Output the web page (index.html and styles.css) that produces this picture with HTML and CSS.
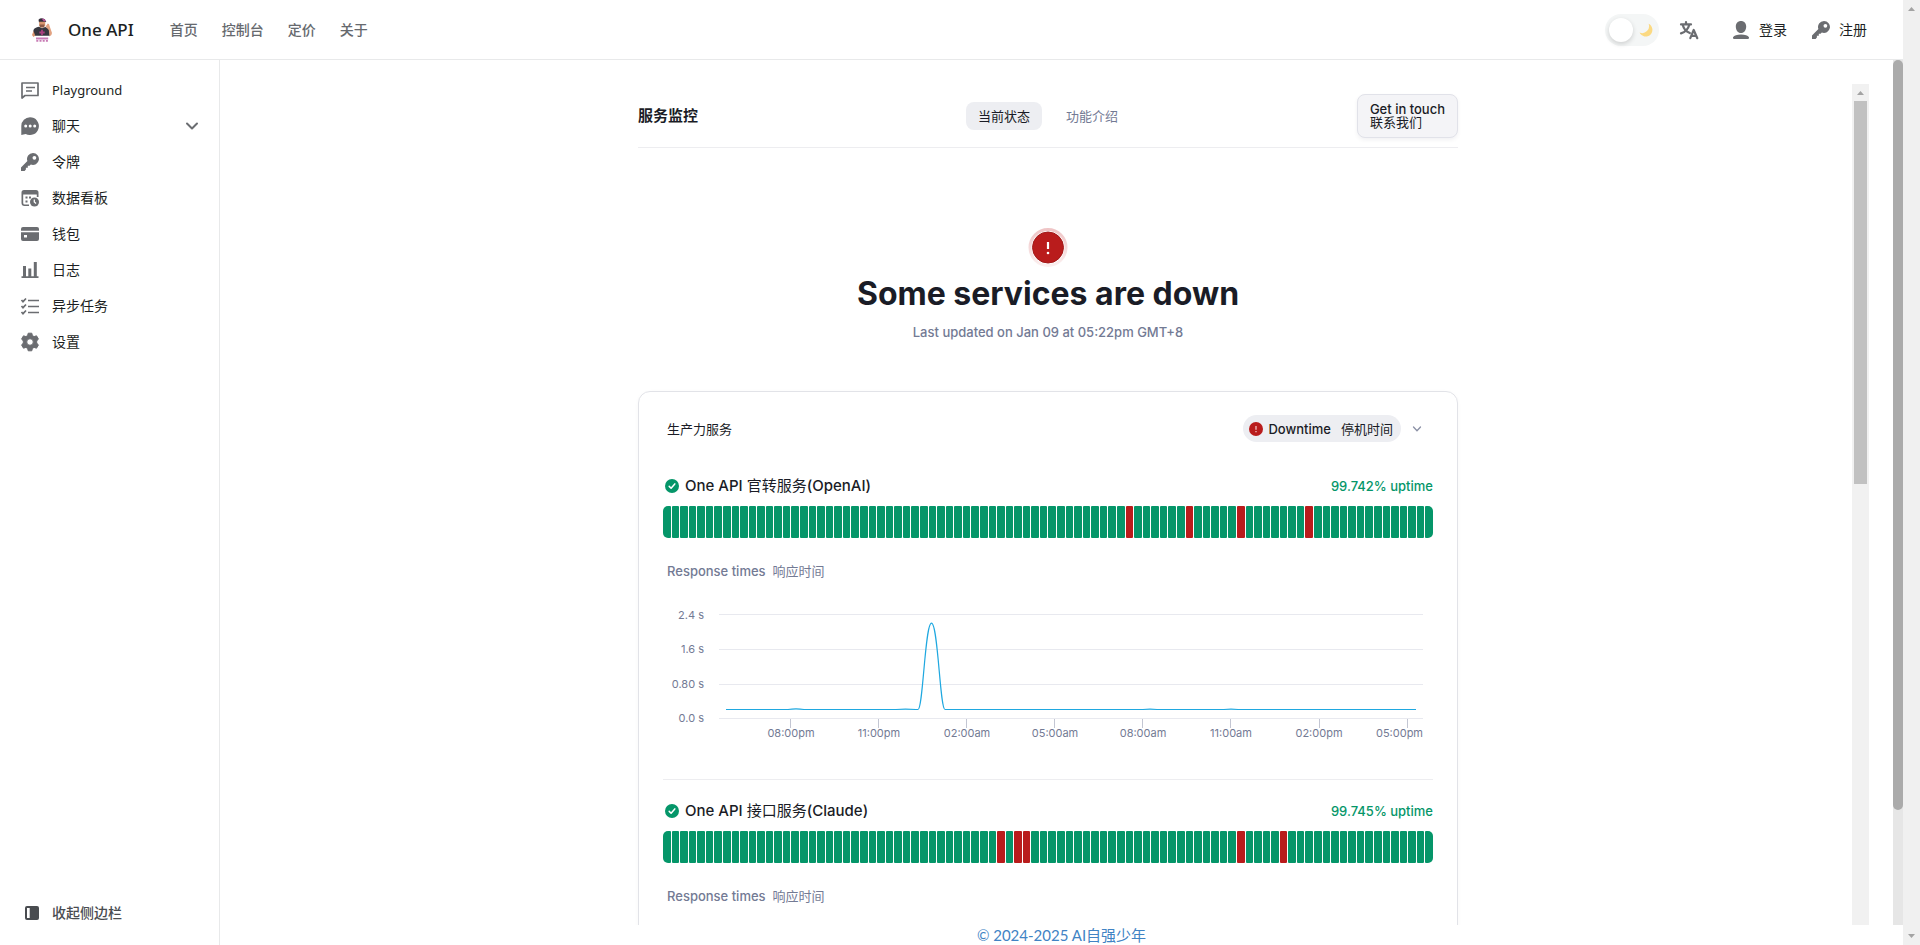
FILE: index.html
```html
<!DOCTYPE html>
<html lang="zh-CN">
<head>
<meta charset="utf-8">
<meta name="viewport" content="width=device-width, initial-scale=1">
<title>One API</title>
<link rel="stylesheet" href="styles.css">
</head>
<body>
<svg class="defs" aria-hidden="true">
  <symbol id="i-key" viewBox="0 0 20 20"><path fill-rule="evenodd" d="M13 1a6 6 0 1 1-2.2 11.6L9.6 13.8H7.8v1.9H5.9v1.9L4.6 19H1v-3.6l6.4-6.3A6 6 0 0 1 13 1zm1.4 2.9a1.9 1.9 0 1 0 0 3.8 1.9 1.9 0 0 0 0-3.8z"/></symbol>
  <symbol id="i-ok" viewBox="0 0 14 14"><circle cx="7" cy="7" r="7" fill="#059669"/><path d="M4.2 7.4l1.9 1.9 3.7-4.4" fill="none" stroke="#fff" stroke-width="1.5" stroke-linecap="round" stroke-linejoin="round"/></symbol>
</svg>

<div class="app">
  <div class="page">
    <header class="topbar">
      <a class="brand" href="#">
        <svg class="logo" viewBox="0 0 20 24">
          <path d="M6.500 1.800Q8 0 11 .4q2.500.3 2.600 2.600l.8.900L7 4.500z" fill="#34303a"/>
          <path d="M9.500.5q4 0 4.200 2.700h-2z" fill="#b5519b"/>
          <path d="M7.200 3.800h6v4q-1.200 2-3.200 2T7.200 7.500z" fill="#d9966f"/>
          <path d="M7.500 6.500h5l-.5 2.800H8z" fill="#8d5b48"/>
          <path d="M1.500 12q1-2.500 5.500-3.200l3 1.500 3.200-1.400q3 .4 4.300 2.800l.5 6H1z" fill="#37373f"/>
          <path d="M13.500 8.500l2.300-3q1.700.4 1.700 2.200L20 15q-.2 3-2.500 3.500l-.7-6.500z" fill="#e2a382"/>
          <path d="M1.500 13L0 17l1.500 2 1.700-1.500z" fill="#d9966f"/>
          <path d="M10 11.800v5.400M7.300 14.500h5.400" stroke="#a9407e" stroke-width="1.800"/>
          <path d="M4 19.500h12.200v2H4zM4.300 22h2v1.700h-2zM7.500 22h2v1.700h-2zM10.700 22h2v1.700h-2zM13.900 22h2v1.700h-2z" fill="#c77ab4"/>
        </svg>
        <span>One API</span>
      </a>
      <nav class="topnav">
        <a href="#">首页</a><a href="#">控制台</a><a href="#">定价</a><a href="#">关于</a>
      </nav>
      <div class="tools">
        <button class="theme" type="button" role="switch" aria-checked="false" aria-label="切换主题">
          <span class="knob"></span>
          <svg width="14" height="14" viewBox="0 0 14 14"><path d="M9.600.8A6.700 6.700 0 1 1 .6 9.600 6.900 6.900 0 0 0 9.600.8z" fill="#fbd982"/></svg>
        </button>
        <button class="iconbtn" type="button" aria-label="语言">
          <svg width="20" height="20" viewBox="0 0 20 20" fill="none" stroke="#6b6d71" stroke-width="2.200" stroke-linecap="round" stroke-linejoin="round"><path d="M2 4.400h10M7 2v2.400M3.800 5q1.300 5.700 7 8M10.200 5Q8.700 11.200 2 13.400M11.300 18.200l3.400-8.200 3.600 8.200M12.500 15.800h4.500"/></svg>
        </button>
        <a class="account" href="#">
          <svg width="20" height="20" viewBox="0 0 20 20"><path d="M10 1c3 0 5.200 2.200 5.200 5.400C15.200 10 13 13 10 13S4.800 10 4.800 6.400C4.800 3.200 7 1 10 1zM2 17.300Q3.800 14.500 10 14.500t8 2.800q.4 1.700-1 1.700H3q-1.400 0-1-1.700z"/></svg>
          <span>登录</span>
        </a>
        <a class="account" href="#"><svg width="20" height="20"><use href="#i-key"/></svg><span>注册</span></a>
      </div>
    </header>

    <div class="body">
      <aside class="sidebar">
        <nav class="menu">
          <a href="#"><svg viewBox="0 0 20 20"><path d="M2 3h16v12.500H5L2 18z" fill="none" stroke="#6b6d71" stroke-width="1.700" stroke-linejoin="round"/><path d="M6 7.500h9M6 11h6" stroke="#6b6d71" stroke-width="1.600"/></svg><span class="latin">Playground</span></a>
          <a href="#"><svg viewBox="0 0 20 20"><path fill-rule="evenodd" d="M10 1.200a8.900 8.900 0 1 1-4.300 16.700L1.300 19V9.900A8.800 8.800 0 0 1 10 1.200zM5.700 8.500a1.500 1.500 0 1 0 0 3 1.500 1.500 0 0 0 0-3zm4.500 0a1.500 1.500 0 1 0 0 3 1.500 1.500 0 0 0 0-3zm4.500 0a1.500 1.500 0 1 0 0 3 1.500 1.500 0 0 0 0-3z"/></svg><span>聊天</span><svg class="chev" viewBox="0 0 14 14"><path d="M2 4.500l5 5 5-5" fill="none" stroke="#6b6d71" stroke-width="2" stroke-linecap="round" stroke-linejoin="round"/></svg></a>
          <a href="#"><svg><use href="#i-key"/></svg><span>令牌</span></a>
          <a href="#"><svg viewBox="0 0 20 20"><path fill-rule="evenodd" d="M4 2h12q2.500 0 2.500 2.500V9h-1.700V6.500H3.200V15q0 1.500 1.500 1.500H9V18H4.500Q1.500 18 1.500 15V4.500Q1.500 2 4 2z"/><path d="M5.500 8.500h2v2h-2zM9 8.500h2v2H9zM5.500 12.500h2v2h-2z"/><circle cx="14.500" cy="14" r="4.500"/><path d="M14.300 11.500V14l1.800 1.400" stroke="#fff" fill="none" stroke-width="1.300"/></svg><span>数据看板</span></a>
          <a href="#"><svg viewBox="0 0 20 20"><path d="M3 3h14q2 0 2 2v1.800H1V5q0-2 2-2z"/><path fill-rule="evenodd" d="M1 8.300h18V15q0 2-2 2H3q-2 0-2-2zM4 11v2.500h3V11z"/></svg><span>钱包</span></a>
          <a href="#"><svg viewBox="0 0 20 20"><path d="M1.500 16.300h17V18h-17zM3 6h3v10.500H3zM8.300 8.500h3v8h-3zM13.800 2h3v14.500h-3z"/></svg><span>日志</span></a>
          <a href="#"><svg viewBox="0 0 20 20" fill="none"><path d="M8 4.500h11M8 10.500h11M8 16.500h11M1.500 4l1.500 1.700L6 2.500M1.500 10l1.500 1.700L6 8.500M1.500 16l1.500 1.700L6 14.500" fill="none" stroke="#6b6d71" stroke-width="1.700"/></svg><span>异步任务</span></a>
          <a href="#"><svg viewBox="0 0 20 20"><path fill-rule="evenodd" d="M8.200 1.200h3.600l.6 2.400 1.700 1 2.400-.8 1.900 3.100L16.700 9v2l1.700 2.100-1.900 3.100-2.400-.8-1.700 1-.6 2.400H8.200l-.6-2.400-1.700-1-2.400.8-1.900-3.100L3.300 11V9L1.600 6.900l1.900-3.100 2.400.8 1.700-1zM10 6.700a3.300 3.300 0 1 0 0 6.600 3.300 3.300 0 0 0 0-6.600z" stroke="#6b6d71" stroke-width="1" stroke-linejoin="round"/></svg><span>设置</span></a>
        </nav>
        <button class="collapse" type="button">
          <svg width="14" height="14" viewBox="0 0 14 14"><rect width="14" height="14" rx="2" fill="#494c50"/><path d="M2 2h2.700v10H2z" fill="#fff"/></svg>
          <span>收起侧边栏</span>
        </button>
      </aside>

      <div class="content">
        <div class="viewport">
          <main class="frame">
            <section class="status">
              <header class="snav">
                <h2>服务监控</h2>
                <nav><a class="on" href="#">当前状态</a><a href="#">功能介绍</a></nav>
                <button type="button">Get in touch<br><span class="zh">联系我们</span></button>
              </header>
              <div class="hero">
                <svg width="40" height="40" viewBox="0 0 40 40"><defs><linearGradient id="ring" x2="0" y2="1"><stop stop-color="#efc5c6"/><stop offset="1" stop-color="#fbefef"/></linearGradient></defs><circle cx="20" cy="19.500" r="18" fill="none" stroke="url(#ring)" stroke-width="3"/><circle cx="20" cy="19.500" r="15.500" fill="#b91c1c" stroke="#a31b1b"/><path d="M20 14v7" stroke="#fff" stroke-width="2.200"/><circle cx="20" cy="25" r="1.300" fill="#fff"/></svg>
                <h1>Some services are down</h1>
                <p>Last updated on Jan 09 at 05:22pm GMT+8</p>
              </div>
              <section class="card">
                <div class="cardhead">
                  <h3>生产力服务</h3>
                  <button type="button"><span class="pill"><svg width="14" height="14" viewBox="0 0 14 14"><circle cx="7" cy="7" r="7" fill="#b91c1c"/><path d="M7 4v3.700M7 9v1.300" stroke="#eeb4b4" stroke-width="1.400"/></svg><span>Downtime</span><span class="zh">停机时间</span></span><svg width="10" height="10" viewBox="0 0 10 10"><path d="M1.500 3L5 6.700 8.500 3" fill="none" stroke="#8a90a5" stroke-width="1.300" stroke-linecap="round"/></svg></button>
                </div>
                <article class="service">
                  <div class="row"><svg width="14" height="14"><use href="#i-ok"/></svg><h4>One API <span class="zh">官转服务</span>(OpenAI)</h4><span class="up">99.742% uptime</span></div>
                  <div class="bars" data-down="54,61,67,75"></div>
                  <p class="rt"><span>Response times</span><span class="zh">响应时间</span></p>
                  <svg class="chart" viewBox="0 0 770 148">
                    <path class="grid" d="M56 14.500h704M56 49.500h704M56 84.500h704M56 118.500h704"/>
                    <path class="tick" d="M127.500 119v9M215.500 119v9M303.500 119v9M391.500 119v9M479.500 119v9M567.500 119v9M656.500 119v9M744.500 119v9"/>
                    <path class="line" d="M63 109.500H125q8-1.200 16 0H233q9-.8 20 0h2C260 109.500 262 23.200 268.500 23.200S277 109.500 282 109.500H480q7-.6 14 0h67q7-.8 14 0H753"/>
                    <g text-anchor="end"><text x="41" y="19">2.4 s</text><text x="41" y="53">1.6 s</text><text x="41" y="88">0.80 s</text><text x="41" y="122">0.0 s</text><text x="760" y="137">05:00pm</text></g>
                    <g text-anchor="middle"><text x="128" y="137">08:00pm</text><text x="216" y="137">11:00pm</text><text x="304" y="137">02:00am</text><text x="392" y="137">05:00am</text><text x="480" y="137">08:00am</text><text x="568" y="137">11:00am</text><text x="656" y="137">02:00pm</text></g>
                  </svg>
                </article>
                <article class="service">
                  <div class="row"><svg width="14" height="14"><use href="#i-ok"/></svg><h4>One API <span class="zh">接口服务</span>(Claude)</h4><span class="up">99.745% uptime</span></div>
                  <div class="bars" data-down="39,41,42,67,72"></div>
                  <p class="rt"><span>Response times</span><span class="zh">响应时间</span></p>
                </article>
              </section>
            </section>
            <div class="sbar"><svg width="17" height="17"><path d="M5 11h7L8.500 7z"/></svg><span class="thumb"></span></div>
          </main>
          <div class="slim"><span></span></div>
        </div>
        <footer><a href="#">© 2024-2025 AI自强少年</a></footer>
      </div>
    </div>
  </div>
  <div class="pagebar"><svg width="17" height="17"><path d="M5 11h7L8.500 7z"/></svg><svg width="17" height="17"><path d="M5 6h7L8.500 10z"/></svg></div>
</div>
<script src="bars.js"></script>
</body>
</html>
```
FILE: styles.css
```css
* { box-sizing: border-box; }
body { margin: 0; background: #fff; color: #1c1f23; font: 14px/20px "Noto Sans", "Noto Sans CJK SC", sans-serif; }
h1, h2, h3, h4, p { margin: 0; }
a { color: inherit; text-decoration: none; }
button { font: inherit; color: inherit; background: none; border: 0; padding: 0; cursor: pointer; }
svg { display: block; flex: none; }
.defs { position: absolute; width: 0; height: 0; }
.zh { font-weight: 400; }

.app { display: flex; height: 100vh; overflow: hidden; }
.page { flex: 1; min-width: 0; display: flex; flex-direction: column; }
.pagebar { width: 17px; background: #f0f0f0; display: flex; flex-direction: column; justify-content: space-between; fill: #a3a3a3; }

.topbar { height: 60px; flex: none; border-bottom: 1px solid #e8e9ea; padding: 0 36px 0 32px; display: flex; align-items: center; }
.brand { display: flex; align-items: center; gap: 16px; font-size: 17px; font-weight: 500; }
.logo { width: 20px; height: 24px; }
.topnav { display: flex; gap: 24px; margin-left: 36px; color: #66696e; font-weight: 500; }
.tools { margin-left: auto; display: flex; align-items: center; fill: #6b6d71; }
.theme { width: 54px; height: 32px; border-radius: 16px; background: #f4f6f6; padding: 0 6px 0 4px; display: flex; align-items: center; justify-content: space-between; }
.knob { width: 24px; height: 24px; border-radius: 50%; background: #fff; box-shadow: 0 2px 5px rgba(0, 0, 0, .16); }
.iconbtn { margin: 0 32px 0 20px; }
.account { display: flex; align-items: center; gap: 8px; }
.account + .account { margin-left: 24px; }

.body { flex: 1; min-height: 0; display: flex; }
.sidebar { width: 220px; flex: none; border-right: 1px solid #e8e9ea; padding: 12px 20px 20px; display: flex; flex-direction: column; justify-content: space-between; }
.menu { display: flex; flex-direction: column; fill: #6b6d71; }
.menu a { height: 36px; display: flex; align-items: center; gap: 12px; }
.menu svg { width: 20px; height: 20px; }
.menu .chev { width: 14px; height: 14px; margin-left: auto; }
.latin { font-size: 13px; }
.collapse { display: flex; align-items: center; gap: 13px; padding-left: 5px; height: 24px; color: #494c50; font-weight: 500; }

.content { flex: 1; min-width: 0; display: flex; flex-direction: column; }
.viewport { flex: 1; min-height: 0; display: flex; padding-left: 24px; }
.slim { width: 10px; margin-left: 24px; background: #e6e6e6; }
.slim span { display: block; height: 750px; border-radius: 5px; background: #ababab; }
.frame { flex: 1; min-width: 0; margin-top: 24px; display: flex; justify-content: space-between; overflow: hidden; color: #1a1c26; font: 13px/20px Inter, "Noto Sans CJK SC", sans-serif; }
.sbar { width: 17px; flex: none; background: #f1f1f1; fill: #a3a3a3; }
.thumb { display: block; height: 383px; margin: 0 2px; background: #c1c1c1; }
footer { height: 20px; flex: none; text-align: center; font: 15px/20px Lato, "Noto Sans CJK SC", sans-serif; color: #4183c4; }

.status { flex: 1; max-width: 820px; margin: 0 auto; }
.snav { height: 64px; border-bottom: 1px solid #ededf0; display: grid; grid-template-columns: 1fr auto 1fr; align-items: center; }
.snav h2 { font-size: 15px; font-weight: 700; }
.snav nav { display: flex; gap: 12px; color: #737a94; }
.snav nav a { padding: 4px 12px; border-radius: 8px; }
.snav nav .on { background: #edeef2; color: #1a1c26; }
.snav button { justify-self: end; padding: 8px 12px; text-align: left; line-height: 13px; font-weight: 500; background: #f4f4f7; border: 1px solid #e1e2e9; border-radius: 8px; box-shadow: 0 2px 4px rgba(20, 20, 50, .06); }

.hero { padding: 80px 0 49px; display: flex; flex-direction: column; align-items: center; }
.hero h1 { font-size: 32px; line-height: 40px; font-weight: 700; margin: 6px 0 8px; }
.hero p { color: #737a94; font-weight: 500; }

.card { border: 1px solid #e2e3e8; border-radius: 12px; padding: 23px 24px; box-shadow: 0 1px 4px rgba(20, 20, 50, .03); }
.cardhead { display: flex; align-items: center; justify-content: space-between; padding: 0 11px 0 4px; }
.cardhead h3 { font-size: 13px; font-weight: 400; }
.cardhead button { display: flex; align-items: center; gap: 11px; font-weight: 500; }
.pill { display: flex; align-items: center; gap: 5px; height: 27px; padding: 0 8px 0 6px; border-radius: 14px; background: #edeef2; }
.pill .zh { margin-left: 5px; }
.service { padding-top: 32px; }
.service + .service { margin-top: 31px; padding-top: 19px; border-top: 1px solid #ededf0; }
.row { display: flex; align-items: center; gap: 6px; height: 24px; padding-left: 2px; }
.row h4 { font-size: 15px; font-weight: 500; }
.up { margin-left: auto; color: #059669; font-weight: 500; }
.bars { display: grid; grid-template-columns: repeat(90, 1fr); column-gap: 1px; height: 32px; margin-top: 8px; border-radius: 5px; overflow: hidden; }
.bars i { background: #059669; border-radius: 1px; }
.bars .down { background: #b91c1c; }
.rt { display: flex; gap: 7px; margin: 23px 0 19px; padding-left: 4px; color: #737a94; font-weight: 500; }
.chart { width: 100%; }
.chart text { font: 11px Inter, sans-serif; fill: #737a94; }
.grid { stroke: #e8e9ef; }
.tick { stroke: #c3c6d3; }
.line { fill: none; stroke: #1fa8e0; stroke-width: 1.2; }
```
FILE: bars.js
```js
document.querySelectorAll('.bars').forEach(function (el) {
  var down = el.dataset.down.split(',').map(Number);
  for (var n = 0; n < 90; n++) {
    var bar = document.createElement('i');
    if (down.indexOf(n) > -1) bar.className = 'down';
    el.appendChild(bar);
  }
});
```
